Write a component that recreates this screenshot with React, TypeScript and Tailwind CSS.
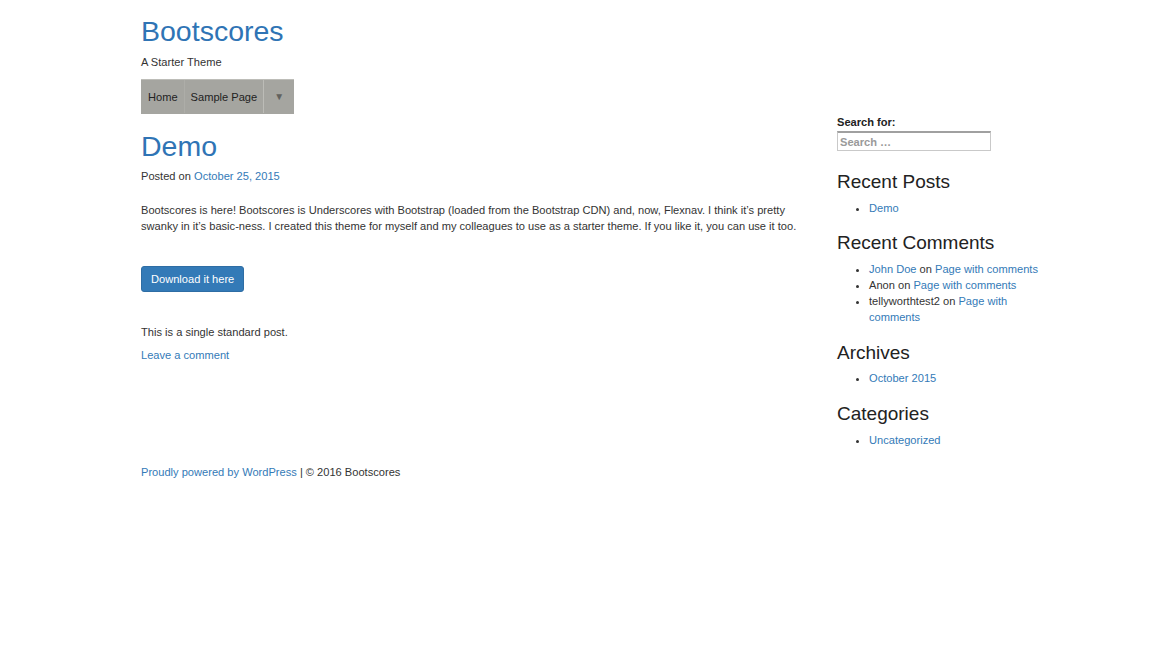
const link = "text-[#337ab7] hover:underline";

const Widget = ({ title, children, mt }: { title: string; children: React.ReactNode; mt: string }) => {
  return (
    <section>
      <h2 className={`${mt} text-[19px] leading-[22px] text-[#222]`}>{title}</h2>
      {children}
    </section>
  );
};

export default function App() {
  return (
    <div
      className="min-h-[661px] w-full bg-white text-[11.1px] leading-4 text-[#333]"
      style={{ fontFamily: '"Liberation Sans", Arial, sans-serif' }}
    >
      <div className="pl-[141px]">
        <header>
          <h1 className="pt-[13px] text-[28.5px] leading-9 text-[#2f74b5]">Bootscores</h1>
          <p className="mt-[5px]">A Starter Theme</p>
          <nav className="mt-[9px] flex h-[35px] w-[153px] border-t border-[#bdbdb8] bg-[#a5a5a0] pb-px text-[#222]">
            <a className="flex items-center border-r border-[#adada8] pl-[7px] pr-[6px]">Home</a>
            <a className="flex items-center pl-[6px] pr-[6px]">Sample Page</a>
            <span className="flex flex-1 items-center justify-center border-l border-[#bcbcb7] text-[10px] text-[#62625e]">
              ▼
            </span>
          </nav>
        </header>

        <div className="flex items-start gap-[30px]">
          <main className="w-[666px]">
            <h1 className="mt-[14px] text-[28.5px] leading-9 text-[#2f74b5]">Demo</h1>
            <p className="mt-1">
              Posted on <a className={link}>October 25, 2015</a>
            </p>
            <p className="mt-[18px]">
              Bootscores is here! Bootscores is Underscores with Bootstrap (loaded from the Bootstrap CDN) and, now,
              Flexnav. I think it’s pretty swanky in it’s basic-ness. I created this theme for myself and my colleagues
              to use as a starter theme. If you like it, you can use it too.
            </p>
            <button className="mt-8 h-[26px] rounded-[3px] border border-[#2e6da4] bg-[#337ab7] px-[9px] text-[11.1px] text-white">
              Download it here
            </button>
            <p className="mt-8">This is a single standard post.</p>
            <p className="mt-[7px]">
              <a className={link}>Leave a comment</a>
            </p>
          </main>

          <aside className="w-[222px]">
            <label className="block text-[11.1px] font-bold text-[#222]">Search for:</label>
            <input
              placeholder="Search …"
              className="mt-px h-5 w-[154px] border border-t-2 border-[#c9c9c9] border-t-[#a0a0a0] px-[2px] text-[11.1px] font-bold placeholder:text-[#9a9a9a] outline-none"
            />

            <Widget title="Recent Posts" mt="mt-5">
              <ul className="mt-[7px] list-disc pl-[32px]">
                <li>
                  <a className={link}>Demo</a>
                </li>
              </ul>
            </Widget>

            <Widget title="Recent Comments" mt="mt-4">
              <ul className="mt-[7px] list-disc pl-[32px] pr-[12px]">
                <li>
                  <a className={link}>John Doe</a> on <a className={link}>Page with comments</a>
                </li>
                <li>
                  Anon on <a className={link}>Page with comments</a>
                </li>
                <li>
                  tellyworthtest2 on <a className={link}>Page with comments</a>
                </li>
              </ul>
            </Widget>

            <Widget title="Archives" mt="mt-[17px]">
              <ul className="mt-[6px] list-disc pl-[32px]">
                <li>
                  <a className={link}>October 2015</a>
                </li>
              </ul>
            </Widget>

            <Widget title="Categories" mt="mt-[17px]">
              <ul className="mt-[7px] list-disc pl-[32px]">
                <li>
                  <a className={link}>Uncategorized</a>
                </li>
              </ul>
            </Widget>
          </aside>
        </div>

        <footer className="mt-4">
          <a className={link}>Proudly powered by WordPress</a> | © 2016 Bootscores
        </footer>
      </div>
    </div>
  );
}
